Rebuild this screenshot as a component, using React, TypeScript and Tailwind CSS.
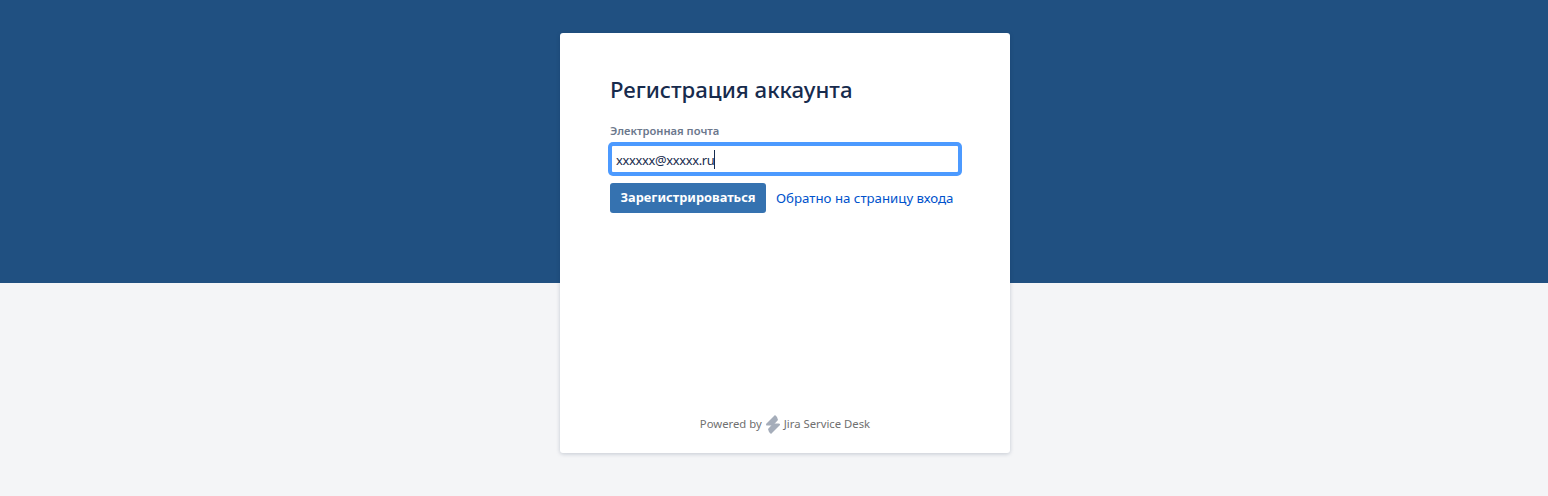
const App = () => {
  return (
    <div className="min-h-[496px] bg-[#f4f5f7] font-['Noto_Sans',sans-serif]">
      <div className="h-[283px] bg-[#205081]" />
      <div className="relative -mt-[250px] ml-[560px] flex h-[420px] w-[450px] flex-col rounded-[3px] bg-white px-[50px] pt-[41px] shadow-[0_1px_4px_rgba(9,30,66,0.2)]">
        <h1 className="text-[22.2px] leading-[32px] font-medium text-[#172b4d]">
          Регистрация аккаунта
        </h1>
        <label className="mt-[17px] block text-[11.2px] leading-[16px] font-semibold text-[#6b778c]">
          Электронная почта
        </label>
        <div className="mt-[5px] flex h-[30px] w-full items-center rounded-[3px] border-2 border-[#4c9aff] bg-white pl-[4px] text-[12.9px] text-[#172b4d] shadow-[0_0_0_2px_#4c9aff]">
          <span className="pt-[3px] tracking-[-0.33px]">xxxxxx@xxxxx.ru</span>
          <span className="h-[19px] w-px bg-[#172b4d]" />
        </div>
        <div className="mt-[9px] flex items-center gap-[10px]">
          <button className="h-[30px] w-[156px] rounded-[3px] bg-[#3572b0] text-[12.8px] font-bold text-white">
            Зарегистрироваться
          </button>
          <a className="pt-[2px] text-[13.25px] text-[#0052cc]">Обратно на страницу входа</a>
        </div>
        <div className="mt-auto mb-[19px] flex items-center justify-center gap-[3px] text-[11.3px] leading-[20px] text-[#707070]">
          <span>Powered by</span>
          <svg width="16" height="19" viewBox="0 0 16 19" fill="#a5adba">
            <path d="M10 0 L1.5 8.5 Q0 10.5 2.5 10.5 H8 L13 5 Q12.5 1.5 10 0 Z" />
            <path d="M6 19 L14.5 10.5 Q16 8.5 13.5 8.5 H8 L3 14 Q3.5 17.5 6 19 Z" />
          </svg>
          <span>Jira Service Desk</span>
        </div>
      </div>
    </div>
  );
};

export default App;
